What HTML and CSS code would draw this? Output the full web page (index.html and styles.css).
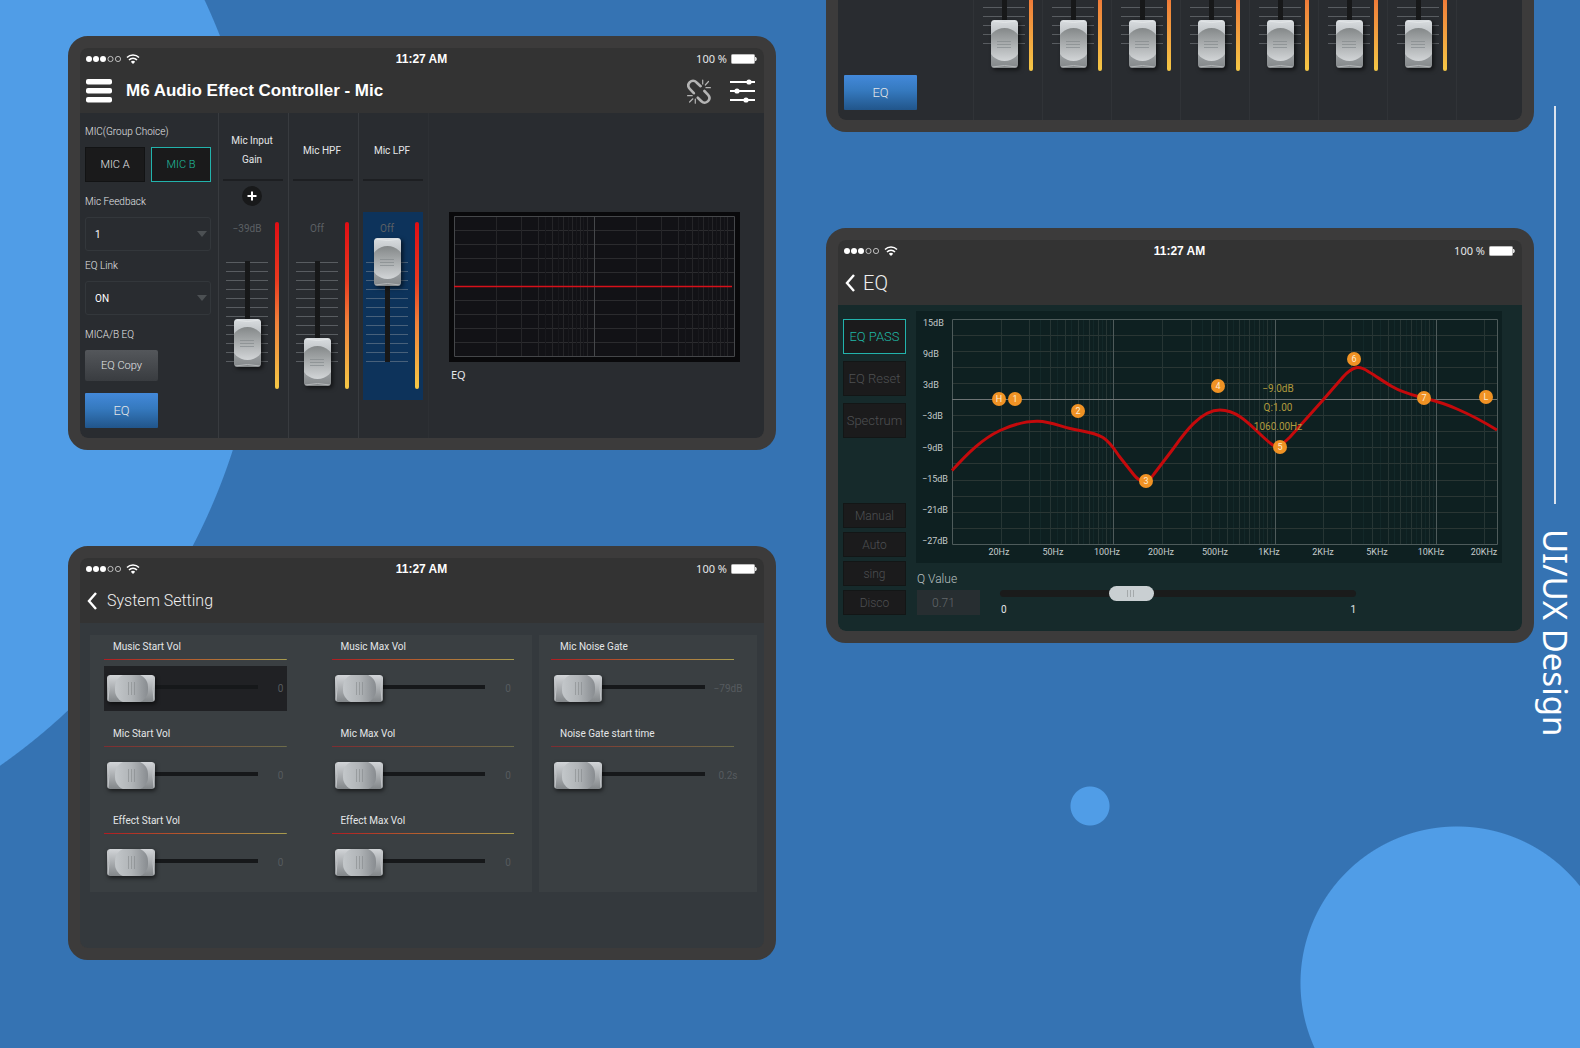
FILE: index.html
```html
<!DOCTYPE html>
<html lang="en">

<head>
    <meta charset="utf-8" />
    <title>M6 Audio Effect Controller</title>
    <link rel="stylesheet" href="styles.css">
</head>

<body>
    <!-- shared icons -->
    <svg class="sprite" width="0" height="0" aria-hidden="true">
        <symbol id="i-signal" viewBox="0 0 54 12">
            <g fill="#fff">
                <circle cx="3" cy="6" r="3" />
                <circle cx="10" cy="6" r="3" />
                <circle cx="17" cy="6" r="3" />
            </g>
            <g fill="none" stroke="#ddd" stroke-width=".8">
                <circle cx="24.5" cy="6" r="2.6" />
                <circle cx="32" cy="6" r="2.6" />
            </g>
            <g fill="none" stroke="#fff" stroke-width="1.5">
                <path d="M41 4.6a8.2 8.2 0 0 1 12 0" />
                <path d="M43 7a5.4 5.4 0 0 1 8 0" />
            </g>
            <path d="M44.8 8.7a3.2 3.2 0 0 1 4.4 0L47 11z" fill="#fff" />
        </symbol>
        <symbol id="i-battery" viewBox="0 0 26 10">
            <rect x=".5" y=".5" width="23" height="9" rx="1" fill="#fff" stroke="#bbb" />
            <path d="M24 3h1l1 2-1 2h-1z" fill="#ddd" />
        </symbol>
        <symbol id="i-back" viewBox="0 0 10 18">
            <path d="M9 1 2 9l7 8" fill="none" stroke="#fff" stroke-width="2.4" />
        </symbol>
    </svg>

    <div class="board">
        <main class="screens">
            <div class="col col-left">
                <!-- mic page -->
                <section class="device">
                    <header class="top">
                        <div class="status">
                            <svg class="signal"><use href="#i-signal" /></svg>
                            <b class="clock">11:27 AM</b>
                            <span class="power">100 % <svg class="battery"><use href="#i-battery" /></svg></span>
                        </div>
                        <div class="bar">
                            <button class="icon-btn" type="button" aria-label="Menu">
                                <svg width="26" height="24" viewBox="0 0 26 24" fill="#fff">
                                    <rect width="26" height="5.5" rx="2" />
                                    <rect y="9" width="26" height="5.5" rx="2" />
                                    <rect y="18" width="26" height="5.5" rx="2" />
                                </svg>
                            </button>
                            <h1 class="title title-bold">M6 Audio Effect Controller - Mic</h1>
                            <div class="actions">
                                <button class="icon-btn" type="button" aria-label="Disconnected">
                                    <svg width="24" height="25" viewBox="0 0 24 25" fill="none" stroke="#b4b4b4" stroke-linecap="round">
                                        <path stroke-width="2.6" d="M6.8 14.2 3 10.2C.8 7.8 1 5 2.8 3.2 4.7 1.3 7.4 1.3 9.3 3.2L13.6 7.2" />
                                        <path stroke-width="2.6" d="M10.8 18.7 14.4 22.2C16.4 24.2 19.2 24 21 22.2 22.9 20.2 22.9 17.8 21.1 15.8L17.4 12" />
                                        <path stroke-width="1.2" d="M15.7 1v4M21.5 2.5 18.3 6M23.4 8.7h-4.4M.6 16.7h4.6M2.6 23 5.9 19.8M8.3 24.2v-4.2" />
                                    </svg>
                                </button>
                                <button class="icon-btn" type="button" aria-label="Settings">
                                    <svg width="25" height="24" viewBox="0 0 25 24" fill="#fff">
                                        <path d="M0 2h25v2H0zM0 11h25v2H0zM0 20h25v2H0z" />
                                        <circle cx="19" cy="3" r="2.6" />
                                        <circle cx="7" cy="12" r="2.6" />
                                        <circle cx="16" cy="21" r="2.6" />
                                    </svg>
                                </button>
                            </div>
                        </div>
                    </header>
                    <div class="mixer">
                        <div class="side-panel">
                            <div class="field">
                                <span class="label">MIC(Group Choice)</span>
                                <div class="pair">
                                    <button class="key" type="button">MIC A</button>
                                    <button class="key key-on" type="button">MIC B</button>
                                </div>
                            </div>
                            <div class="field field-gap">
                                <label class="label" for="feedback">Mic Feedback</label>
                                <select class="drop" id="feedback">
                                    <option>1</option>
                                    <option>2</option>
                                </select>
                            </div>
                            <div class="field">
                                <label class="label" for="link">EQ Link</label>
                                <select class="drop" id="link">
                                    <option>ON</option>
                                    <option>OFF</option>
                                </select>
                            </div>
                            <div class="field field-gap">
                                <span class="label">MICA/B EQ</span>
                                <button class="copy-btn" type="button">EQ Copy</button>
                            </div>
                            <button class="eq-btn" type="button">EQ</button>
                        </div>

                        <div class="strip">
                            <label class="strip-name" for="gain">Mic Input Gain</label>
                            <div class="strip-tool">
                                <button class="plus" type="button" aria-label="Add">
                                    <svg width="20" height="20" viewBox="0 0 20 20">
                                        <circle cx="10" cy="10" r="10" fill="#18191a" />
                                        <path d="M10 5.5v9M5.5 10h9" stroke="#fff" stroke-width="2" />
                                    </svg>
                                </button>
                            </div>
                            <div class="slot">
                                <div class="slot-main">
                                    <output class="slot-value" for="gain">−39dB</output>
                                    <input class="fader" id="gain" type="range" value="19">
                                </div>
                                <i class="level"></i>
                            </div>
                        </div>
                        <div class="strip">
                            <label class="strip-name" for="hpf">Mic HPF</label>
                            <div class="strip-tool"></div>
                            <div class="slot">
                                <div class="slot-main">
                                    <output class="slot-value" for="hpf">Off</output>
                                    <input class="fader" id="hpf" type="range" value="0">
                                </div>
                                <i class="level"></i>
                            </div>
                        </div>
                        <div class="strip">
                            <label class="strip-name" for="lpf">Mic LPF</label>
                            <div class="strip-tool"></div>
                            <div class="slot slot-on">
                                <div class="slot-main">
                                    <output class="slot-value" for="lpf">Off</output>
                                    <input class="fader" id="lpf" type="range" value="100">
                                </div>
                                <i class="level"></i>
                            </div>
                        </div>

                        <figure class="mini">
                            <svg viewBox="0 0 291 150">
                                <rect width="291" height="150" fill="#09090b" />
                                <rect x="5" y="4" width="280" height="140" fill="#121216" />
                                <path stroke="#2b2b2e" fill="none" d="M5 18.5h280M5 32.5h280M5 46.5h280M5 60.5h280M5 88.5h280M5 102.5h280M5 116.5h280M5 130.5h280" />
                                <path stroke="#252528" fill="none" d="M47.5 4v140M72.5 4v140M89.5 4v140M103.5 4v140M114.5 4v140M123.5 4v140M131.5 4v140M138.5 4v140M187.5 4v140M212.5 4v140M229.5 4v140M243.5 4v140M254.5 4v140M263.5 4v140M271.5 4v140M278.5 4v140" />
                                <path stroke="#19191d" fill="none" d="M96.5 4v140M109.5 4v140M119.5 4v140M127.5 4v140M134.5 4v140M236.5 4v140M249.5 4v140M259.5 4v140M267.5 4v140M275.5 4v140" />
                                <path stroke="#45474a" fill="none" d="M5.5 4.5h280v140h-280zM145.5 4v140" />
                                <path stroke="#d8101a" fill="none" stroke-width="1.5" d="M5 74.5h278" />
                            </svg>
                            <figcaption>EQ</figcaption>
                        </figure>
                    </div>
                </section>

                <!-- system setting page -->
                <section class="device">
                    <header class="top">
                        <div class="status">
                            <svg class="signal"><use href="#i-signal" /></svg>
                            <b class="clock">11:27 AM</b>
                            <span class="power">100 % <svg class="battery"><use href="#i-battery" /></svg></span>
                        </div>
                        <div class="bar">
                            <a class="back" href="#" aria-label="Back"><svg width="10" height="18"><use href="#i-back" /></svg></a>
                            <h2 class="title">System Setting</h2>
                        </div>
                    </header>
                    <div class="settings">
                        <div class="panel panel-two">
                            <div class="vol">
                                <label for="v1">Music Start Vol</label>
                                <div class="vol-box vol-on">
                                    <input class="knob" id="v1" type="range" value="0">
                                    <output for="v1">0</output>
                                </div>
                            </div>
                            <div class="vol">
                                <label for="v2">Music Max Vol</label>
                                <div class="vol-box">
                                    <input class="knob" id="v2" type="range" value="0">
                                    <output for="v2">0</output>
                                </div>
                            </div>
                            <div class="vol vol-dim">
                                <label for="v3">Mic Start Vol</label>
                                <div class="vol-box">
                                    <input class="knob" id="v3" type="range" value="0">
                                    <output for="v3">0</output>
                                </div>
                            </div>
                            <div class="vol vol-dim">
                                <label for="v4">Mic Max Vol</label>
                                <div class="vol-box">
                                    <input class="knob" id="v4" type="range" value="0">
                                    <output for="v4">0</output>
                                </div>
                            </div>
                            <div class="vol">
                                <label for="v5">Effect Start Vol</label>
                                <div class="vol-box">
                                    <input class="knob" id="v5" type="range" value="0">
                                    <output for="v5">0</output>
                                </div>
                            </div>
                            <div class="vol">
                                <label for="v6">Effect Max Vol</label>
                                <div class="vol-box">
                                    <input class="knob" id="v6" type="range" value="0">
                                    <output for="v6">0</output>
                                </div>
                            </div>
                        </div>
                        <div class="panel panel-one">
                            <div class="vol">
                                <label for="v7">Mic Noise Gate</label>
                                <div class="vol-box">
                                    <input class="knob" id="v7" type="range" value="0">
                                    <output for="v7">−79dB</output>
                                </div>
                            </div>
                            <div class="vol vol-dim">
                                <label for="v8">Noise Gate start time</label>
                                <div class="vol-box">
                                    <input class="knob" id="v8" type="range" value="0">
                                    <output for="v8">0.2s</output>
                                </div>
                            </div>
                        </div>
                    </div>
                </section>
            </div>

            <div class="col">
                <!-- lower part of the channel page -->
                <section class="device device-cut">
                    <div class="mixer">
                        <div class="side-panel">
                            <button class="eq-btn" type="button">EQ</button>
                        </div>
                        <div class="strip"><div class="slot"><input class="fader" type="range" value="0" aria-label="Channel 1"><i class="level"></i></div></div>
                        <div class="strip"><div class="slot"><input class="fader" type="range" value="0" aria-label="Channel 2"><i class="level"></i></div></div>
                        <div class="strip"><div class="slot"><input class="fader" type="range" value="0" aria-label="Channel 3"><i class="level"></i></div></div>
                        <div class="strip"><div class="slot"><input class="fader" type="range" value="0" aria-label="Channel 4"><i class="level"></i></div></div>
                        <div class="strip"><div class="slot"><input class="fader" type="range" value="0" aria-label="Channel 5"><i class="level"></i></div></div>
                        <div class="strip"><div class="slot"><input class="fader" type="range" value="0" aria-label="Channel 6"><i class="level"></i></div></div>
                        <div class="strip"><div class="slot"><input class="fader" type="range" value="0" aria-label="Channel 7"><i class="level"></i></div></div>
                        <div class="strip strip-end"></div>
                    </div>
                </section>

                <!-- eq page -->
                <section class="device">
                    <header class="top">
                        <div class="status">
                            <svg class="signal"><use href="#i-signal" /></svg>
                            <b class="clock">11:27 AM</b>
                            <span class="power">100 % <svg class="battery"><use href="#i-battery" /></svg></span>
                        </div>
                        <div class="bar">
                            <a class="back" href="#" aria-label="Back"><svg width="10" height="18"><use href="#i-back" /></svg></a>
                            <h2 class="title title-thin">EQ</h2>
                        </div>
                    </header>
                    <div class="eq">
                        <div class="eq-keys">
                            <button class="eq-key eq-key-on" type="button">EQ PASS</button>
                            <button class="eq-key" type="button">EQ Reset</button>
                            <button class="eq-key" type="button">Spectrum</button>
                            <div class="presets">
                                <button class="preset" type="button">Manual</button>
                                <button class="preset" type="button">Auto</button>
                                <button class="preset" type="button">sing</button>
                                <button class="preset" type="button">Disco</button>
                            </div>
                        </div>
                        <div class="eq-main">
                            <svg class="chart" viewBox="0 0 586 252">
                                <rect width="586" height="252" fill="#0e2021" />
                                <g class="axis">
                                    <text x="7" y="15">15dB</text>
                                    <text x="7" y="46">9dB</text>
                                    <text x="7" y="77">3dB</text>
                                    <text x="6" y="108">−3dB</text>
                                    <text x="6" y="140">−9dB</text>
                                    <text x="6" y="171">−15dB</text>
                                    <text x="6" y="202">−21dB</text>
                                    <text x="6" y="233">−27dB</text>
                                </g>
                                <g class="axis axis-x">
                                    <text x="83" y="244">20Hz</text>
                                    <text x="137" y="244">50Hz</text>
                                    <text x="191" y="244">100Hz</text>
                                    <text x="245" y="244">200Hz</text>
                                    <text x="299" y="244">500Hz</text>
                                    <text x="353" y="244">1KHz</text>
                                    <text x="407" y="244">2KHz</text>
                                    <text x="461" y="244">5KHz</text>
                                    <text x="515" y="244">10KHz</text>
                                    <text x="568" y="244">20KHz</text>
                                </g>
                                <g transform="translate(36 8)" fill="none">
                                    <path stroke="#132829" d="M88.5 0v225M105.5 0v225M119.5 0v225M131.5 0v225M141.5 0v225M150.5 0v225M158.5 0v225M250.5 0v225M267.5 0v225M281.5 0v225M292.5 0v225M302.5 0v225M311.5 0v225M319.5 0v225M411.5 0v225M428.5 0v225M442.5 0v225M454.5 0v225M464.5 0v225M473.5 0v225M481.5 0v225" />
                                    <path stroke="#2a3634" d="M0 16.5h545M0 32.5h545M0 48.5h545M0 64.5h545M0 96.5h545M0 112.5h545M0 128.5h545M0 144.5h545M0 161.5h545M0 177.5h545M0 193.5h545M0 209.5h545" />
                                    <path stroke="#263534" d="M49.5 0v225M77.5 0v225M98.5 0v225M113.5 0v225M126.5 0v225M137.5 0v225M146.5 0v225M154.5 0v225M210.5 0v225M239.5 0v225M259.5 0v225M275.5 0v225M287.5 0v225M297.5 0v225M307.5 0v225M315.5 0v225M371.5 0v225M399.5 0v225M420.5 0v225M436.5 0v225M448.5 0v225M459.5 0v225M469.5 0v225M477.5 0v225M532.5 0v225" />
                                    <path stroke="#4e5b5b" d="M.5.5h545v225H.5zM161.5 0v225M323.5 0v225M484.5 0v225" />
                                    <path stroke="#6d7374" d="M0 80.5h545" />
                                    <path stroke="#c50a0c" stroke-width="3" stroke-linejoin="round" d="M0 151.5C16 134 30 120 48 111.5C60 106 73 102 86 102.3C98 102.5 106 106.5 118 109.5C130 112.5 141 112.5 151 118.5C158 123 163 131 167 137L182 156C189 165 197 163 202 155L221 130C231 116 248 91 268 91C290 91 304 114 320 125.5C325 129.5 330 126 338 118L371 81L391 58C401 47 407 46 417 53C424 57 432 63 440 67.5C451 74 461 76 472 79C484 82 494 85 505 90C519 96 532 103 545 111" />
                                </g>
                                <g class="readout">
                                    <text x="362" y="81">−9.0dB</text>
                                    <text x="362" y="100">Q:1.00</text>
                                    <text x="362" y="119">1060.00Hz</text>
                                </g>
                                <g class="nodes">
                                    <circle cx="83" cy="88" r="7" />
                                    <circle cx="99" cy="88" r="7" />
                                    <circle cx="162" cy="100" r="7" />
                                    <circle cx="230" cy="170" r="7" />
                                    <circle cx="302" cy="75" r="7" />
                                    <circle cx="364" cy="136" r="7" />
                                    <circle cx="438" cy="48" r="7" />
                                    <circle cx="508" cy="87" r="7" />
                                    <circle cx="570" cy="86" r="7" />
                                    <text x="83" y="91">H</text>
                                    <text x="99" y="91">1</text>
                                    <text x="162" y="103">2</text>
                                    <text x="230" y="173">3</text>
                                    <text x="302" y="78">4</text>
                                    <text x="364" y="139">5</text>
                                    <text x="438" y="51">6</text>
                                    <text x="508" y="90">7</text>
                                    <text x="570" y="89">L</text>
                                </g>
                            </svg>
                            <div class="q-row">
                                <div class="q-value">
                                    <label for="q">Q Value</label>
                                    <input id="q" type="text" value="0.71">
                                </div>
                                <div class="q-slide">
                                    <input class="pill" type="range" value="35" aria-label="Q">
                                    <div class="q-ends"><span>0</span><span>1</span></div>
                                </div>
                            </div>
                        </div>
                    </div>
                </section>
            </div>
        </main>

        <aside class="tag">
            <i class="tag-line"></i>
            <span class="tag-text">UI/UX Design</span>
        </aside>
    </div>
</body>

</html>
```
FILE: styles.css
```css
* {
    box-sizing: border-box;
}

body {
    margin: 0;
    min-height: 100vh;
    overflow: hidden;
    font-family: Roboto, "Liberation Sans", sans-serif;
    font-size: 10px;
    color: #e4e6e8;
    background:
        radial-gradient(circle at -354px 261px, #509de7 616px, transparent 617px),
        radial-gradient(circle at calc(100% - 490px) 806px, #509de7 19px, transparent 20px),
        radial-gradient(circle at calc(100% - 123px) 983px, #509de7 156px, transparent 157px),
        #3573b3;
}

button,
input,
select {
    margin: 0;
    padding: 0;
    border: 0;
    font: inherit;
    color: inherit;
}

svg {
    display: block;
}

.sprite {
    position: absolute;
}

.board {
    display: flex;
}

.screens {
    flex: 1;
    display: grid;
    grid-template-columns: 1fr 1fr;
    gap: 50px;
    padding-left: 68px;
}

.col {
    display: flex;
    flex-direction: column;
    gap: 96px;
}

.col-left {
    padding-top: 36px;
}

/* device frame */
.device {
    border: 12px solid #3c3b3b;
    border-radius: 20px;
    overflow: hidden;
    background: #3c3b3b;
}

.device-cut {
    border-top: 0;
    border-radius: 0 0 20px 20px;
}

.top {
    background: #333;
    border-radius: 8px 8px 0 0;
}

.status {
    display: grid;
    grid-template-columns: 1fr auto 1fr;
    align-items: center;
    height: 21px;
    padding: 0 7px 0 6px;
}

.signal {
    width: 54px;
    height: 12px;
}

.clock {
    font: bold 12px/20px "Liberation Sans", Arial, sans-serif;
    color: #fff;
}

.power {
    display: flex;
    justify-content: flex-end;
    align-items: center;
    gap: 4px;
    font: 11px/20px "Noto Sans", sans-serif;
}

.battery {
    width: 26px;
    height: 10px;
}

.bar {
    display: flex;
    align-items: center;
    height: 44px;
    padding: 0 9px 0 6px;
}

.icon-btn {
    background: none;
    cursor: pointer;
}

.title {
    margin: 0 0 0 10px;
    font-size: 16px;
    font-weight: 300;
    line-height: 24px;
    color: #f0f0f0;
}

.title-bold {
    margin-left: 14px;
    font: bold 17px/24px "Liberation Sans", Arial, sans-serif;
    color: #fff;
}

.title-thin {
    margin-left: 8px;
    font-size: 20px;
}

.back {
    margin-left: 1px;
}

.actions {
    display: flex;
    align-items: center;
    gap: 19px;
    margin-left: auto;
}

/* mixer */
.mixer {
    display: flex;
    background: #292c30;
    border-radius: 0 0 8px 8px;
    overflow: hidden;
}

.side-panel {
    flex: 0 0 138px;
    padding: 9px 7px 10px 5px;
}

.field {
    padding-bottom: 5px;
}

.field-gap {
    padding-top: 5px;
}

.label {
    display: block;
    margin-bottom: 5px;
    line-height: 20px;
    font-weight: 300;
}

.pair {
    display: flex;
    gap: 6px;
}

.key {
    flex: 1;
    height: 35px;
    border: 1px solid #121314;
    background: #1a1a1b;
    font-size: 11px;
    font-weight: 300;
}

.key-on {
    border: 1px solid #22b3ac;
    color: #1fbf9f;
}

.drop {
    display: block;
    width: 100%;
    height: 34px;
    padding: 0 9px;
    border: 1px solid #33373b;
    border-radius: 3px;
    appearance: none;
    background: url("data:image/svg+xml,%3Csvg xmlns='http://www.w3.org/2000/svg' width='10' height='6'%3E%3Cpath d='M0 0h10L5 6z' fill='%234c5053'/%3E%3C/svg%3E") no-repeat right 3px center;
    color: #fff;
}

.copy-btn {
    display: block;
    width: 73px;
    height: 31px;
    border-radius: 2px;
    background: linear-gradient(#54575b, #393c40);
    font-size: 11px;
    font-weight: 300;
}

.eq-btn {
    display: block;
    width: 73px;
    height: 35px;
    margin-top: 7px;
    border-radius: 1px;
    background: linear-gradient(#4389da, #3579be 45%, #21558a);
    font-size: 13px;
    font-weight: 300;
}

.strip {
    flex: 0 0 70px;
    padding: 0 5px 0 4px;
    border-left: 1px solid #383b3f;
}

.strip-name {
    display: flex;
    align-items: center;
    justify-content: center;
    height: 68px;
    padding: 8px 6px 0 4px;
    border-bottom: 2px solid #1d1f22;
    line-height: 19px;
    text-align: center;
}

.strip-tool {
    display: flex;
    align-items: center;
    justify-content: center;
    height: 31px;
    padding: 0 2px 2px 0;
}

.plus {
    border-radius: 10px;
    background: none;
}

.slot {
    display: flex;
    gap: 7px;
    padding: 10px 4px 11px 3px;
}

.slot-on {
    background: #0d335b;
}

.slot-main {
    display: flex;
    flex-direction: column;
    gap: 2px;
}

.slot-value {
    line-height: 14px;
    text-align: center;
    color: #5c6064;
}

.level {
    width: 4px;
    height: 167px;
    border-radius: 2px;
    background: linear-gradient(#e00d14, #ea3a1f 35%, #f0813a 60%, #f5c846);
}

/* vertical fader: groove, then twelve tick marks behind the cap */
.fader {
    width: 42px;
    height: 148px;
    appearance: none;
    writing-mode: vertical-lr;
    direction: rtl;
    background:
        linear-gradient(#171819, #171819) no-repeat center 23px / 5px 101px,
        repeating-linear-gradient(rgba(160, 165, 170, .4) 0, rgba(160, 165, 170, .4) 1px, transparent 1px, transparent 9px) no-repeat 0 24px / 42px 100px;
}

.fader::-webkit-slider-thumb {
    appearance: none;
    width: 27px;
    height: 48px;
    border-radius: 3px;
    box-shadow: 2px 2px 4px rgba(0, 0, 0, .6);
    background: url("data:image/svg+xml,%3Csvg xmlns='http://www.w3.org/2000/svg' width='27' height='48'%3E%3Cdefs%3E%3ClinearGradient id='a' x2='0' y2='1'%3E%3Cstop stop-color='%23d9dde0'/%3E%3Cstop offset='.4' stop-color='%23b4b8bb'/%3E%3Cstop offset='1' stop-color='%23838789'/%3E%3C/linearGradient%3E%3ClinearGradient id='b' x2='0' y2='1'%3E%3Cstop stop-color='%23848889'/%3E%3Cstop offset='1' stop-color='%23d2d5d7'/%3E%3C/linearGradient%3E%3CclipPath id='c'%3E%3Crect width='27' height='48' rx='3'/%3E%3C/clipPath%3E%3C/defs%3E%3Cg clip-path='url(%23c)'%3E%3Crect width='27' height='48' fill='url(%23a)'/%3E%3Cpath d='M1 1q12.5 3 25 0' stroke='%23e2e5e7' fill='none'/%3E%3Cpath d='M1 47q12.5-3 25 0' stroke='%23b3b6b8' fill='none'/%3E%3Ccircle cx='13.5' cy='24.5' r='16.5' fill='url(%23b)'/%3E%3C/g%3E%3Cpath d='M6 21.5h14M6 24.5h14M6 27.5h14' stroke='%23858a8d' opacity='.7'/%3E%3C/svg%3E") no-repeat;
}

.mini {
    flex: 1;
    margin: 0;
    padding: 99px 24px 0 20px;
    border-left: 1px solid #2d3034;
}

.mini figcaption {
    padding: 4px 2px;
    font: 11px/18px "Noto Sans", sans-serif;
}

.device-cut .side-panel {
    flex-basis: 135px;
    padding: 68px 6px 10px;
}

.device-cut .strip {
    flex-basis: 69px;
    padding: 0 4px;
    border-color: #303337;
}

.device-cut .slot {
    align-items: flex-end;
    gap: 4px;
    margin-top: -106px;
    padding-left: 5px;
}

.device-cut .fader {
    margin-bottom: 3px;
}

.device-cut .strip-end {
    flex: 1;
}

/* system setting */
.settings {
    display: grid;
    grid-template-columns: 442fr 218fr;
    gap: 7px;
    padding: 12px 7px 56px 10px;
    border-radius: 0 0 8px 8px;
    background: #34393d;
}

.panel {
    display: grid;
    align-content: start;
    row-gap: 11px;
    padding-bottom: 7px;
    background: #3a3f42;
}

.panel-two {
    grid-template-columns: 1fr 1fr;
    column-gap: 45px;
    padding-left: 14px;
    padding-right: 18px;
}

.panel-one {
    padding-left: 12px;
    padding-right: 23px;
}

.vol label {
    display: block;
    height: 25px;
    margin-bottom: 6px;
    padding-left: 9px;
    line-height: 24px;
    background: linear-gradient(90deg, #b01c22, #b5622f 50%, #a89c4e) no-repeat bottom / 100% 1px;
}

.vol-dim label {
    background-image: linear-gradient(90deg, #7e2d31, #7a5039 50%, #6d6c4a);
}

.vol-box {
    display: flex;
    align-items: center;
    height: 45px;
    padding-left: 3px;
}

.vol-on {
    background: #202124;
}

.vol-box output {
    flex: 0 0 46px;
    margin-right: -17px;
    text-align: center;
    color: #565b5f;
}

.knob {
    flex: 1;
    min-width: 0;
    height: 27px;
    appearance: none;
    background: linear-gradient(#16181a, #16181a) no-repeat 20px 10px / 100% 4px;
}

.knob::-webkit-slider-thumb {
    appearance: none;
    width: 48px;
    height: 27px;
    border-radius: 3px;
    box-shadow: 1px 2px 4px rgba(0, 0, 0, .6);
    background: url("data:image/svg+xml,%3Csvg xmlns='http://www.w3.org/2000/svg' width='48' height='27'%3E%3Cdefs%3E%3ClinearGradient id='a' x2='0' y2='1'%3E%3Cstop stop-color='%23d2d5d8'/%3E%3Cstop offset='1' stop-color='%23828689'/%3E%3C/linearGradient%3E%3ClinearGradient id='b'%3E%3Cstop stop-color='%23c3c7ca'/%3E%3Cstop offset='.5' stop-color='%23b0b4b7'/%3E%3Cstop offset='1' stop-color='%23888c90'/%3E%3C/linearGradient%3E%3CclipPath id='c'%3E%3Crect width='48' height='27' rx='3'/%3E%3C/clipPath%3E%3C/defs%3E%3Cg clip-path='url(%23c)'%3E%3Crect width='48' height='27' fill='url(%23a)'/%3E%3Cpath d='M1 1q2 12.5 0 25M47 1q-2 12.5 0 25' stroke='%23c2c5c8' fill='none'/%3E%3Crect x='8' y='-1' width='33' height='29' rx='13' fill='url(%23b)'/%3E%3C/g%3E%3Cpath d='M21.5 7v13M24.5 7v13M27.5 7v13' stroke='%237d8184' opacity='.5'/%3E%3C/svg%3E") no-repeat;
}

/* eq page */
.eq {
    display: flex;
    gap: 10px;
    padding: 6px 20px 15px 5px;
    border-radius: 0 0 8px 8px;
    background: #162a2b;
}

.eq-keys {
    flex: 0 0 63px;
    display: flex;
    flex-direction: column;
    gap: 7px;
    padding: 8px 0 1px;
}

.eq-key,
.preset {
    height: 35px;
    border: 1px solid #131616;
    background: #1b1b1c;
    font-size: 13px;
    font-weight: 300;
    color: #4e5052;
}

.eq-key-on {
    border: 1px solid #22b3ac;
    color: #1fb8a6;
}

.presets {
    display: grid;
    gap: 4px;
    margin-top: auto;
}

.preset {
    height: 25px;
    font-size: 12px;
}

.eq-main {
    flex: 1;
}

.chart {
    width: 100%;
}

.axis {
    font-size: 9px;
    fill: #c5cccc;
}

.axis-x,
.readout,
.nodes {
    text-anchor: middle;
}

.readout {
    fill: #b09a3e;
}

.nodes {
    font-size: 9px;
    fill: #f09224;
}

.nodes text {
    fill: #fdebd0;
}

.q-row {
    display: flex;
    gap: 20px;
    padding: 6px 146px 0 1px;
}

.q-value {
    flex: 0 0 63px;
    font-size: 12px;
    font-weight: 300;
}

.q-value label {
    display: block;
    line-height: 20px;
    color: #b9c0c0;
}

.q-value input {
    display: block;
    width: 100%;
    height: 25px;
    margin-top: 1px;
    padding-right: 10px;
    background: #272e31;
    text-align: center;
    color: #64696c;
}

.q-slide {
    flex: 1;
    padding-top: 17px;
}

.pill {
    display: block;
    width: 100%;
    height: 15px;
    appearance: none;
    background: none;
}

.pill::-webkit-slider-runnable-track {
    height: 7px;
    border-radius: 4px;
    background: #1a1b1b;
}

.pill::-webkit-slider-thumb {
    appearance: none;
    width: 45px;
    height: 15px;
    margin-top: -4px;
    border-radius: 8px;
    background: url("data:image/svg+xml,%3Csvg xmlns='http://www.w3.org/2000/svg' width='45' height='15'%3E%3Cpath d='M18.5 4v7M21.5 4v7M24.5 4v7' stroke='%23a4a9ab'/%3E%3C/svg%3E") no-repeat #c9cfd2;
}

.q-ends {
    display: flex;
    justify-content: space-between;
    padding: 3px 0 0 1px;
    line-height: 12px;
}

/* vertical caption at the right edge */
.tag {
    flex: 0 0 46px;
    display: flex;
    flex-direction: column;
    align-items: center;
    gap: 25px;
    padding: 106px 4px 0 0;
}

.tag-line {
    width: 2px;
    height: 398px;
    background: #dbe3ee;
}

.tag-text {
    writing-mode: vertical-rl;
    font: 33px/42px "Noto Sans", sans-serif;
    color: #fff;
}
```
